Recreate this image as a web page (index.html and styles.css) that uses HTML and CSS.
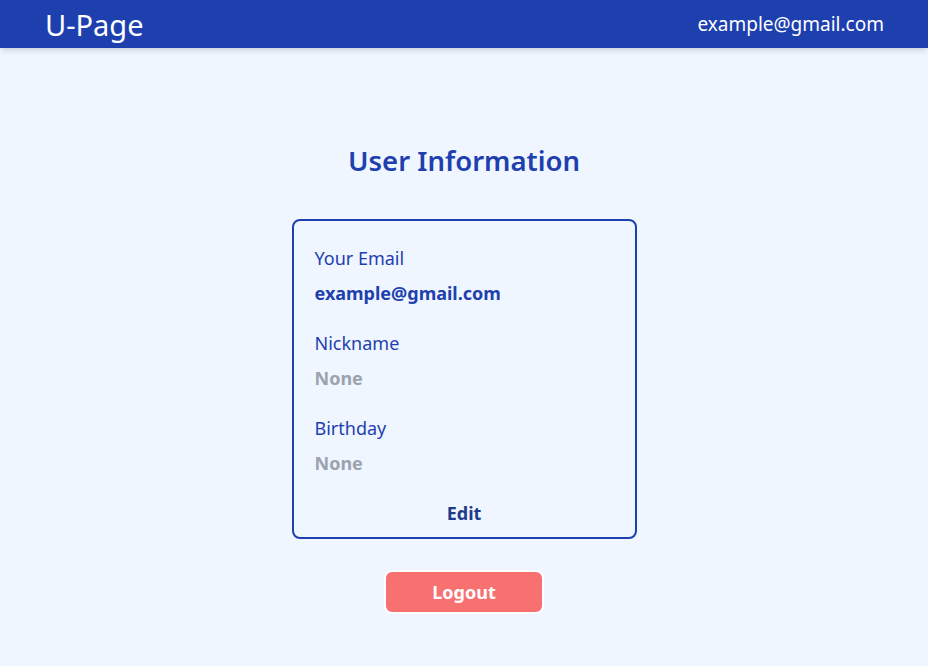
FILE: index.html
```html
<!DOCTYPE html>
<html>
<head>
<meta charset="utf-8">
<link rel="stylesheet" href="styles.css">
</head>
<body>
<header class="topbar">
  <div class="brand">U-Page</div>
  <div class="user-email">example@gmail.com</div>
</header>
<main class="content">
  <h1 class="title">User Information</h1>
  <section class="card">
    <div class="field">
      <div class="label">Your Email</div>
      <div class="value">example@gmail.com</div>
    </div>
    <div class="field">
      <div class="label">Nickname</div>
      <div class="value empty">None</div>
    </div>
    <div class="field">
      <div class="label">Birthday</div>
      <div class="value empty">None</div>
    </div>
    <button class="edit">Edit</button>
  </section>
  <button class="logout">Logout</button>
</main>
</body>
</html>
```
FILE: styles.css
```css
* { box-sizing: border-box; }
html, body { margin: 0; padding: 0; }
body {
  background: #eff6ff;
  font-family: "Noto Sans", "Open Sans", sans-serif;
  color: #1e40af;
  min-height: 666px;
}
.topbar {
  height: 48px;
  background: #1e40af;
  color: #fff;
  display: flex;
  align-items: center;
  justify-content: space-between;
  padding: 0 44px 0 45px;
  box-shadow: 0 4px 6px -1px rgba(0,0,0,0.1), 0 2px 4px -2px rgba(0,0,0,0.1);
}
.brand { font-size: 29px; line-height: 36px; padding-top: 1px; }
.user-email { font-size: 19px; line-height: 28px; }
.content {
  display: flex;
  flex-direction: column;
  align-items: center;
  padding-top: 95px;
}
.title {
  margin: 0;
  font-size: 27.5px;
  line-height: 36px;
  font-weight: 600;
  color: #1e40af;
}
.card {
  margin-top: 40px;
  width: 345px;
  border: 2px solid #1e40af;
  border-radius: 8px;
  padding: 23px 21px 10px;
  display: flex;
  flex-direction: column;
}
.field { display: flex; flex-direction: column; gap: 7px; margin-bottom: 22px; }
.label { font-size: 18px; line-height: 28px; }
.value { font-size: 18px; line-height: 28px; font-weight: 700; }
.value.empty { color: #9ca3af; }
.edit {
  background: none;
  border: none;
  padding: 0;
  font-family: inherit;
  font-size: 18px;
  line-height: 28px;
  font-weight: 700;
  color: #1e3a8a;
  cursor: pointer;
}
.logout {
  margin-top: 31px;
  width: 160px;
  height: 44px;
  padding: 0;
  background: #f87171;
  border: 2px solid #fff;
  border-radius: 8px;
  color: #fff;
  font-family: inherit;
  font-size: 18px;
  line-height: 28px;
  font-weight: 700;
  cursor: pointer;
}
```
